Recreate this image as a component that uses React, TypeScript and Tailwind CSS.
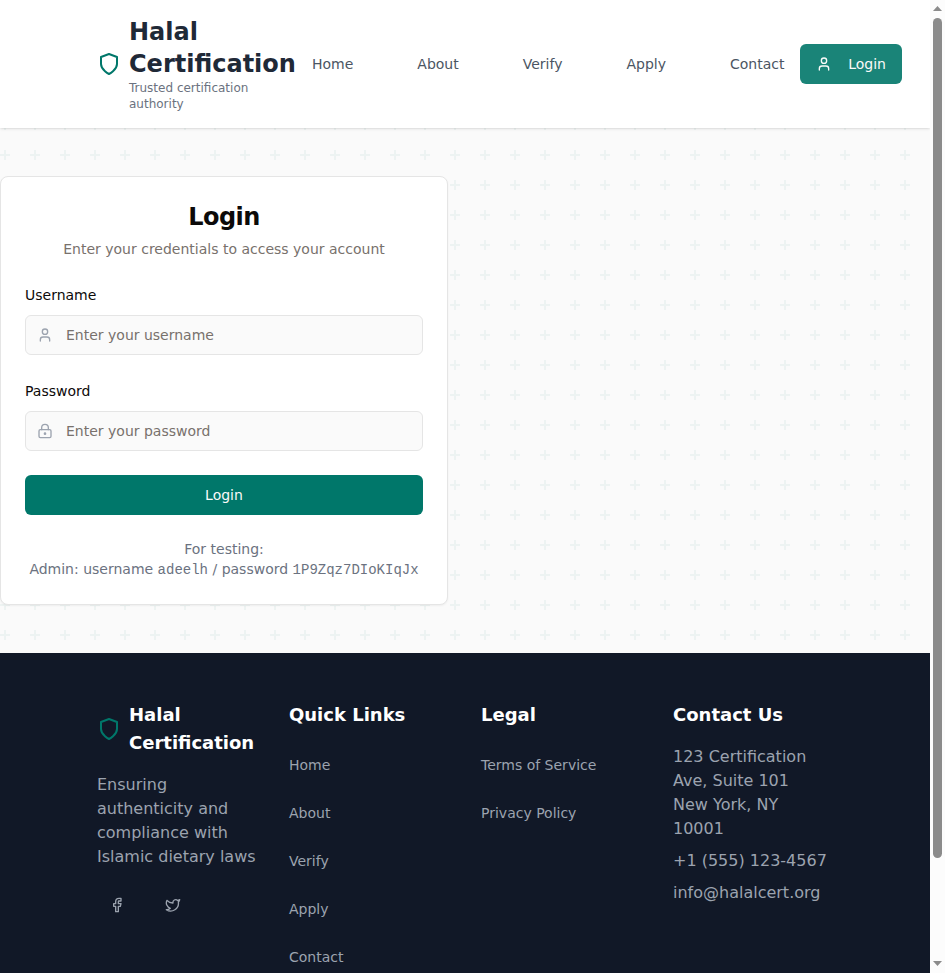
import React from 'react';
import { User, LockKeyhole, Facebook, Twitter } from 'lucide-react';

const navLinks = ['Home', 'About', 'Verify', 'Apply', 'Contact'];
const legalLinks = ['Terms of Service', 'Privacy Policy'];

function ShieldIcon() {
  return (
    <svg
      className="size-6 shrink-0 text-[#00776a]"
      viewBox="0 0 24 24"
      fill="none"
      stroke="currentColor"
      strokeWidth="2"
      strokeLinecap="round"
      strokeLinejoin="round"
    >
      <path d="M12 22s8-4 8-10V5l-8-3-8 3v7c0 6 8 10 8 10z" />
    </svg>
  );
}

function Header() {
  return (
    <header className="relative z-10 h-32 w-[930px] bg-white shadow-sm">
      <div className="flex h-32 items-center pl-[97px]">
        <div className="flex w-[199px] items-center gap-2">
          <ShieldIcon />
          <div>
            <h1 className="w-[167px] text-2xl font-bold text-[#1f2937]">Halal Certification</h1>
            <p className="w-[150px] text-xs text-[#6b7280]">Trusted certification authority</p>
          </div>
        </div>
        <nav className="ml-4 flex w-[472.5px] justify-between text-sm text-[#4b5563]">
          {navLinks.map((label) => (
            <a key={label} href="#">{label}</a>
          ))}
        </nav>
        <button className="ml-[15.5px] flex h-10 w-[102px] items-center justify-between rounded-md bg-[#1a8478] px-4 text-sm text-[#fafaf9]">
          <User className="size-4" />
          Login
        </button>
      </div>
    </header>
  );
}

function Field({ label, placeholder, icon }: { label: string; placeholder: string; icon: React.ReactNode }) {
  return (
    <label className="block">
      <span className="block text-sm leading-5 text-[#0c0a09]">{label}</span>
      <span className="mt-[10px] flex h-10 items-center rounded-md border border-[#e5e5e5] bg-[#fafafa] pl-[11px] text-[#9ca3af]">
        {icon}
        <input
          placeholder={placeholder}
          className="ml-[13px] w-80 bg-transparent text-sm outline-none placeholder:text-[#78716c]"
        />
      </span>
    </label>
  );
}

function LoginCard() {
  return (
    <section className="h-[429px] w-[448px] rounded-lg border border-[#e5e5e5] bg-white px-6 pt-6 shadow-[0_1px_2px_0_rgb(0_0_0/0.05)]">
      <h2 className="text-center text-2xl font-bold tracking-tight text-[#0c0a09]">Login</h2>
      <p className="mt-1.5 text-center text-sm text-[#78716c]">Enter your credentials to access your account</p>
      <div className="mt-[26px] flex flex-col gap-[26px]">
        <Field label="Username" placeholder="Enter your username" icon={<User className="size-4 shrink-0" />} />
        <Field label="Password" placeholder="Enter your password" icon={<LockKeyhole className="size-4 shrink-0" />} />
      </div>
      <button className="mt-6 h-10 w-full rounded-md bg-[#00776a] text-sm text-[#fafaf9]">Login</button>
      <div className="mt-6 text-center text-sm whitespace-nowrap text-[#6b7280]">
        <p>For testing:</p>
        <p>
          Admin: username <span className="font-['Liberation_Mono',monospace]">adeelh</span> / password{' '}
          <span className="font-['Liberation_Mono',monospace]">1P9Zqz7DIoKIqJx</span>
        </p>
      </div>
    </section>
  );
}

function PlusPattern() {
  return (
    <svg className="absolute inset-0 -z-10 h-full w-full" aria-hidden="true">
      <defs>
        <pattern id="plus" width="30" height="30" y="-128" patternUnits="userSpaceOnUse">
          <path d="M4 0h2v4h4v2h-4v4h-2v-4h-4v-2h4z" fill="#00796b" fillOpacity="0.05" />
        </pattern>
      </defs>
      <rect width="100%" height="100%" fill="url(#plus)" />
    </svg>
  );
}

function LinkColumn({ title, links }: { title: string; links: string[] }) {
  return (
    <div>
      <h3 className="text-lg font-semibold text-white">{title}</h3>
      <ul className="mt-3 text-sm">
        {links.map((label) => (
          <li key={label} className="flex h-12 items-center">{label}</li>
        ))}
      </ul>
    </div>
  );
}

function Footer() {
  return (
    <footer className="h-[320px] w-[930px] overflow-hidden bg-[#111827] pt-12 pl-[97px] text-[#9ca3af]">
      <div className="grid w-[736px] grid-cols-4 gap-8">
        <div>
          <div className="flex items-center gap-2">
            <ShieldIcon />
            <h3 className="text-lg font-semibold text-white">Halal Certification</h3>
          </div>
          <p className="mt-4 w-[162px]">Ensuring authenticity and compliance with Islamic dietary laws</p>
          <div className="mt-4 flex gap-4">
            <span className="flex size-10 items-center justify-center"><Facebook className="size-4" /></span>
            <span className="flex size-10 items-center justify-center"><Twitter className="size-4" /></span>
          </div>
        </div>
        <LinkColumn title="Quick Links" links={navLinks} />
        <LinkColumn title="Legal" links={legalLinks} />
        <div>
          <h3 className="text-lg font-semibold text-white">Contact Us</h3>
          <address className="mt-4 space-y-2 not-italic whitespace-nowrap">
            <p>123 Certification<br />Ave, Suite 101<br />New York, NY<br />10001</p>
            <p>+1 (555) 123-4567</p>
            <p>info@halalcert.org</p>
          </address>
        </div>
      </div>
    </footer>
  );
}

function Scrollbar() {
  return (
    <div className="relative z-20 flex h-[973px] w-[15px] flex-col items-center bg-[#fcfcfc]">
      <svg className="h-[18px] w-[15px]" viewBox="0 0 15 18"><path d="M3 11h9L7.5 6z" fill="#8b8b8b" /></svg>
      <div className="h-[840px] w-[9px] rounded-full bg-[#8b8b8b]" />
      <svg className="mt-auto h-[15px] w-[15px]" viewBox="0 0 15 15"><path d="M3 3h9L7.5 8z" fill="#8b8b8b" /></svg>
    </div>
  );
}

export default function App() {
  return (
    <div className="flex h-[973px] w-[945px] overflow-hidden font-['DejaVu_Sans',sans-serif]">
      <div className="w-[930px]">
        <Header />
        <main className="relative isolate h-[525px] bg-[#fafafa] pt-12">
          <PlusPattern />
          <LoginCard />
        </main>
        <Footer />
      </div>
      <Scrollbar />
    </div>
  );
}
